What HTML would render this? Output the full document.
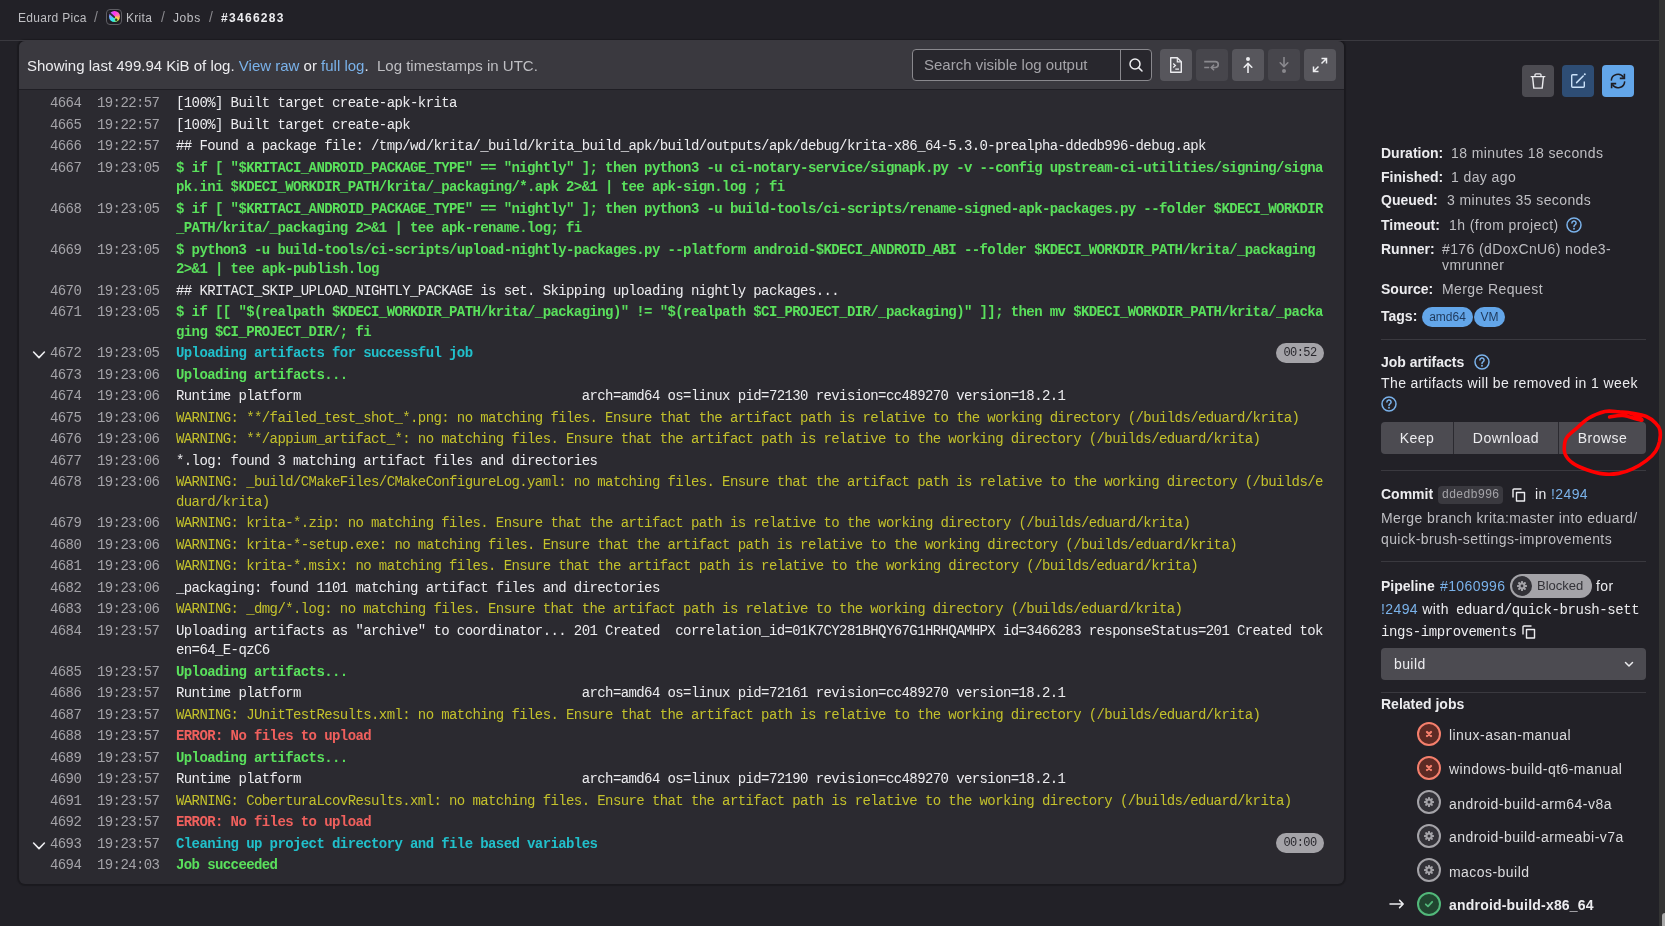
<!DOCTYPE html>
<html><head><meta charset="utf-8">
<style>
*{box-sizing:border-box;margin:0;padding:0}
html,body{width:1665px;height:926px;overflow:hidden}
body{background:#222127;font-family:"Liberation Sans",sans-serif;color:#ececef;position:relative}
#wrap{position:absolute;left:0;top:0;width:1665px;height:926px;will-change:transform}
.abs{position:absolute;white-space:nowrap}
/* breadcrumb */
.bc{position:absolute;top:0;left:0;height:40px;font-size:12px;line-height:16px;color:#bfbfc3}
.bc span{position:absolute;top:10px;white-space:nowrap}
.topline{position:absolute;left:0;top:40px;width:1659px;height:1px;background:#3a393f}
/* log */
.log{position:absolute;left:19px;top:41px;width:1325px;height:843px;background:#2b2a30;border-radius:6px;overflow:hidden;box-shadow:0 0 1px 2px rgba(0,0,0,.22)}
.lhead{position:absolute;left:0;top:0;width:1325px;height:49px;background:#3a393f;border-bottom:1px solid #1f1e24}
.lhead .msg{position:absolute;left:8px;top:16px;font-size:15px;line-height:18px;color:#ececef;white-space:nowrap}
.lhead .msg a{color:#7ab2ea;text-decoration:none}
.lhead .msg .dim{color:#bfbfc3}
.search{position:absolute;left:893px;top:8px;width:240px;height:32px;border:1px solid #89888d;border-radius:4px;background:#28272d}
.search .ph{position:absolute;left:11px;top:6px;font-size:15px;line-height:18px;color:#a4a3a8;white-space:nowrap}
.search .div{position:absolute;left:207px;top:0;width:1px;height:30px;background:#89888d}
.search svg{position:absolute;left:215px;top:7px}
.tb{position:absolute;top:8px;width:32px;height:32px;border-radius:4px;background:#57565c}
.tb.dis{background:#47464c}
.tb svg{position:absolute;left:8px;top:8px}
.row{position:absolute;left:0;width:1325px;font-family:"Liberation Mono",monospace;font-size:14px;letter-spacing:-0.6px;line-height:19.5px;padding-top:1px}
.row .ln{position:absolute;left:31px;top:1px;color:#a4a3a8}
.row .ts{position:absolute;left:78px;top:1px;color:#a4a3a8}
.row .tx{position:absolute;left:157px;top:1px;white-space:pre}
.row .chev{position:absolute;left:12px;top:3px}
.w{color:#ececef}
.g{color:#5ae05c;font-weight:bold}
.c{color:#21c0cb;font-weight:bold}
.y{color:#c3c12c}
.r{color:#f0605d;font-weight:bold}
.dur{position:absolute;left:1257px;top:-0.4px;width:48px;height:20px;border-radius:10px;background:#a4a3a8;color:#28272d;font-size:12px;line-height:20px;text-align:center}
/* sidebar */
.sb{font-size:14px;line-height:16px;color:#bfbfc3}
.sb b{color:#ececef;font-weight:bold;letter-spacing:0}
.sb .v{letter-spacing:.4px}
.hr{position:absolute;left:1381px;width:265px;height:1px;background:#3a393f}
.btn{position:absolute;width:32px;height:32px;border-radius:4px}
.btn svg{position:absolute;left:8px;top:8px}
.tag{position:absolute;top:307px;height:20px;border-radius:10px;background:#63a6e9;color:#1f3a5c;font-size:12px;line-height:20px;text-align:center}
.bgrp{position:absolute;left:1381px;top:422px;width:265px;height:32px;border-radius:4px;background:#4c4b51;overflow:hidden}
.bgrp span{position:absolute;top:0;height:32px;line-height:32px;font-size:14px;color:#ececef;text-align:center;letter-spacing:.5px}
.bgrp i{position:absolute;top:0;width:1px;height:32px;background:#2b2a30}
.link{color:#7ab2ea}
.mono{font-family:"Liberation Mono",monospace}
.job{position:absolute;left:1449px;font-size:14px;line-height:16px;color:#dcdcde;letter-spacing:.45px;white-space:nowrap}
.st{position:absolute;left:1417px;width:24px;height:24px;border-radius:50%}
.st svg{position:absolute;left:0;top:0}
.scroll{position:absolute;left:1659px;top:0;width:6px;height:926px;background:#333333}
</style></head><body><div id="wrap">

<div class="bc">
  <span style="left:18px;letter-spacing:.3px">Eduard Pica</span>
  <span style="left:94px;top:9px;font-size:14px;color:#89888d">/</span>
  <div style="position:absolute;left:106px;top:9px;width:16px;height:16px;border:1.2px solid #5f5e64;border-radius:4px;background:#1f1e24"></div>
  <div style="position:absolute;left:108.6px;top:11.4px;width:11px;height:11px;border-radius:50%;background:conic-gradient(from 0deg,#ff33ee 0deg,#ff66bb 60deg,#ffa070 95deg,#ffe040 125deg,#9be850 150deg,#30f0e0 195deg,#40d8ff 230deg,#7aa8ff 270deg,#b070ff 300deg,#ff33ee 360deg)"></div>
  <svg style="position:absolute;left:106px;top:9px" width="16" height="16" viewBox="0 0 16 16"><path d="M3 3.4 L8.2 8.2" stroke="#2a292e" stroke-width="1.8" stroke-linecap="round"/><circle cx="10.2" cy="10.8" r="1.2" fill="#2a292e"/></svg>
  <span style="left:126px;letter-spacing:.3px">Krita</span>
  <span style="left:161px;top:9px;font-size:14px;color:#89888d">/</span>
  <span style="left:173px;letter-spacing:.6px">Jobs</span>
  <span style="left:209px;top:9px;font-size:14px;color:#89888d">/</span>
  <span style="left:221px;color:#ececef;font-weight:bold;letter-spacing:1.3px">#3466283</span>
</div>

<div class="log">
  <div class="lhead">
    <div class="msg">Showing last 499.94 KiB of log. <a>View raw</a> or <a>full log</a>.&nbsp; <span class="dim">Log timestamps in UTC.</span></div>
    <div class="search"><span class="ph">Search visible log output</span><div class="div"></div>
      <svg width="16" height="16" viewBox="0 0 16 16"><circle cx="7" cy="7" r="5" fill="none" stroke="#ececef" stroke-width="1.5"/><path d="M10.6 10.6 L14 14" stroke="#ececef" stroke-width="1.5" stroke-linecap="round"/></svg>
    </div>
    <div class="tb" style="left:1141px"><svg width="16" height="16" viewBox="0 0 16 16"><path d="M2.7 0.8 H9.3 L13.3 4.8 V15.2 H2.7 Z" fill="none" stroke="#ececef" stroke-width="1.4" stroke-linejoin="round"/><path d="M9.3 0.8 V4.8 H13.3" fill="none" stroke="#ececef" stroke-width="1.2"/><path d="M5.2 6.6 L7.4 8.6 L5.2 10.6" fill="none" stroke="#ececef" stroke-width="1.3"/><path d="M7.3 12.2 H11" stroke="#ececef" stroke-width="1.3"/></svg></div>
    <div class="tb dis" style="left:1177px"><svg width="16" height="16" viewBox="0 0 16 16"><path d="M0.2 4.6 H11.3 A2.95 2.95 0 0 1 11.3 10.5 H7.5" fill="none" stroke="#8a898e" stroke-width="1.6"/><path d="M9.6 8.2 L7.3 10.5 L9.6 12.8" fill="none" stroke="#8a898e" stroke-width="1.6" stroke-linecap="round"/><path d="M0.2 10.5 H5.2" stroke="#8a898e" stroke-width="1.6"/></svg></div>
    <div class="tb" style="left:1213px"><svg width="16" height="16" viewBox="0 0 16 16"><circle cx="8" cy="2" r="2" fill="#ececef"/><path d="M8 6.5 V16" stroke="#ececef" stroke-width="1.6"/><path d="M4.2 10.2 L8 6.4 L11.8 10.2" fill="none" stroke="#ececef" stroke-width="1.6" stroke-linecap="round"/></svg></div>
    <div class="tb dis" style="left:1249px"><svg width="16" height="16" viewBox="0 0 16 16"><circle cx="8" cy="14" r="2" fill="#8a898e"/><path d="M8 0 V9.5" stroke="#8a898e" stroke-width="1.6"/><path d="M4.2 5.8 L8 9.6 L11.8 5.8" fill="none" stroke="#8a898e" stroke-width="1.6" stroke-linecap="round"/></svg></div>
    <div class="tb" style="left:1285px"><svg width="16" height="16" viewBox="0 0 16 16"><path d="M9.5 1.5 H14.5 V6.5 M14.5 1.5 L9.5 6.5" fill="none" stroke="#ececef" stroke-width="1.5"/><path d="M6.5 14.5 H1.5 V9.5 M1.5 14.5 L6.5 9.5" fill="none" stroke="#ececef" stroke-width="1.5"/></svg></div>
  </div>
<div class="row" style="top:52.30px;height:21.50px"><span class="ln">4664</span><span class="ts">19:22:57</span><span class="tx"><span class="w">[100%] Built target create-apk-krita</span></span></div>
<div class="row" style="top:73.80px;height:21.50px"><span class="ln">4665</span><span class="ts">19:22:57</span><span class="tx"><span class="w">[100%] Built target create-apk</span></span></div>
<div class="row" style="top:95.30px;height:21.50px"><span class="ln">4666</span><span class="ts">19:22:57</span><span class="tx"><span class="w">## Found a package file: /tmp/wd/krita/_build/krita_build_apk/build/outputs/apk/debug/krita-x86_64-5.3.0-prealpha-ddedb996-debug.apk</span></span></div>
<div class="row" style="top:116.80px;height:41.00px"><span class="ln">4667</span><span class="ts">19:23:05</span><span class="tx"><span class="g">$ if [ &quot;$KRITACI_ANDROID_PACKAGE_TYPE&quot; == &quot;nightly&quot; ]; then python3 -u ci-notary-service/signapk.py -v --config upstream-ci-utilities/signing/signa</span><br><span class="g">pk.ini $KDECI_WORKDIR_PATH/krita/_packaging/*.apk 2&gt;&amp;1 | tee apk-sign.log ; fi</span></span></div>
<div class="row" style="top:157.80px;height:41.00px"><span class="ln">4668</span><span class="ts">19:23:05</span><span class="tx"><span class="g">$ if [ &quot;$KRITACI_ANDROID_PACKAGE_TYPE&quot; == &quot;nightly&quot; ]; then python3 -u build-tools/ci-scripts/rename-signed-apk-packages.py --folder $KDECI_WORKDIR</span><br><span class="g">_PATH/krita/_packaging 2&gt;&amp;1 | tee apk-rename.log; fi</span></span></div>
<div class="row" style="top:198.80px;height:41.00px"><span class="ln">4669</span><span class="ts">19:23:05</span><span class="tx"><span class="g">$ python3 -u build-tools/ci-scripts/upload-nightly-packages.py --platform android-$KDECI_ANDROID_ABI --folder $KDECI_WORKDIR_PATH/krita/_packaging</span><br><span class="g">2&gt;&amp;1 | tee apk-publish.log</span></span></div>
<div class="row" style="top:239.80px;height:21.50px"><span class="ln">4670</span><span class="ts">19:23:05</span><span class="tx"><span class="w">## KRITACI_SKIP_UPLOAD_NIGHTLY_PACKAGE is set. Skipping uploading nightly packages...</span></span></div>
<div class="row" style="top:261.30px;height:41.00px"><span class="ln">4671</span><span class="ts">19:23:05</span><span class="tx"><span class="g">$ if [[ &quot;$(realpath $KDECI_WORKDIR_PATH/krita/_packaging)&quot; != &quot;$(realpath $CI_PROJECT_DIR/_packaging)&quot; ]]; then mv $KDECI_WORKDIR_PATH/krita/_packa</span><br><span class="g">ging $CI_PROJECT_DIR/; fi</span></span></div>
<div class="row" style="top:302.30px;height:21.50px"><svg class="chev" width="16" height="16" viewBox="0 0 16 16"><path d="M2.6 6 L8 11.6 L13.4 6" fill="none" stroke="#ececef" stroke-width="1.6" stroke-linecap="round" stroke-linejoin="round"/></svg><span class="ln">4672</span><span class="ts">19:23:05</span><span class="tx"><span class="c">Uploading artifacts for successful job</span></span><span class="dur">00:52</span></div>
<div class="row" style="top:323.80px;height:21.50px"><span class="ln">4673</span><span class="ts">19:23:06</span><span class="tx"><span class="g">Uploading artifacts...</span></span></div>
<div class="row" style="top:345.30px;height:21.50px"><span class="ln">4674</span><span class="ts">19:23:06</span><span class="tx"><span class="w">Runtime platform                                    arch=amd64 os=linux pid=72130 revision=cc489270 version=18.2.1</span></span></div>
<div class="row" style="top:366.80px;height:21.50px"><span class="ln">4675</span><span class="ts">19:23:06</span><span class="tx"><span class="y">WARNING: **/failed_test_shot_*.png: no matching files. Ensure that the artifact path is relative to the working directory (/builds/eduard/krita)</span></span></div>
<div class="row" style="top:388.30px;height:21.50px"><span class="ln">4676</span><span class="ts">19:23:06</span><span class="tx"><span class="y">WARNING: **/appium_artifact_*: no matching files. Ensure that the artifact path is relative to the working directory (/builds/eduard/krita)</span></span></div>
<div class="row" style="top:409.80px;height:21.50px"><span class="ln">4677</span><span class="ts">19:23:06</span><span class="tx"><span class="w">*.log: found 3 matching artifact files and directories</span></span></div>
<div class="row" style="top:431.30px;height:41.00px"><span class="ln">4678</span><span class="ts">19:23:06</span><span class="tx"><span class="y">WARNING: _build/CMakeFiles/CMakeConfigureLog.yaml: no matching files. Ensure that the artifact path is relative to the working directory (/builds/e</span><br><span class="y">duard/krita)</span></span></div>
<div class="row" style="top:472.30px;height:21.50px"><span class="ln">4679</span><span class="ts">19:23:06</span><span class="tx"><span class="y">WARNING: krita-*.zip: no matching files. Ensure that the artifact path is relative to the working directory (/builds/eduard/krita)</span></span></div>
<div class="row" style="top:493.80px;height:21.50px"><span class="ln">4680</span><span class="ts">19:23:06</span><span class="tx"><span class="y">WARNING: krita-*-setup.exe: no matching files. Ensure that the artifact path is relative to the working directory (/builds/eduard/krita)</span></span></div>
<div class="row" style="top:515.30px;height:21.50px"><span class="ln">4681</span><span class="ts">19:23:06</span><span class="tx"><span class="y">WARNING: krita-*.msix: no matching files. Ensure that the artifact path is relative to the working directory (/builds/eduard/krita)</span></span></div>
<div class="row" style="top:536.80px;height:21.50px"><span class="ln">4682</span><span class="ts">19:23:06</span><span class="tx"><span class="w">_packaging: found 1101 matching artifact files and directories</span></span></div>
<div class="row" style="top:558.30px;height:21.50px"><span class="ln">4683</span><span class="ts">19:23:06</span><span class="tx"><span class="y">WARNING: _dmg/*.log: no matching files. Ensure that the artifact path is relative to the working directory (/builds/eduard/krita)</span></span></div>
<div class="row" style="top:579.80px;height:41.00px"><span class="ln">4684</span><span class="ts">19:23:57</span><span class="tx"><span class="w">Uploading artifacts as &quot;archive&quot; to coordinator... 201 Created  correlation_id=01K7CY281BHQY67G1HRHQAMHPX id=3466283 responseStatus=201 Created tok</span><br><span class="w">en=64_E-qzC6</span></span></div>
<div class="row" style="top:620.80px;height:21.50px"><span class="ln">4685</span><span class="ts">19:23:57</span><span class="tx"><span class="g">Uploading artifacts...</span></span></div>
<div class="row" style="top:642.30px;height:21.50px"><span class="ln">4686</span><span class="ts">19:23:57</span><span class="tx"><span class="w">Runtime platform                                    arch=amd64 os=linux pid=72161 revision=cc489270 version=18.2.1</span></span></div>
<div class="row" style="top:663.80px;height:21.50px"><span class="ln">4687</span><span class="ts">19:23:57</span><span class="tx"><span class="y">WARNING: JUnitTestResults.xml: no matching files. Ensure that the artifact path is relative to the working directory (/builds/eduard/krita)</span></span></div>
<div class="row" style="top:685.30px;height:21.50px"><span class="ln">4688</span><span class="ts">19:23:57</span><span class="tx"><span class="r">ERROR: No files to upload</span></span></div>
<div class="row" style="top:706.80px;height:21.50px"><span class="ln">4689</span><span class="ts">19:23:57</span><span class="tx"><span class="g">Uploading artifacts...</span></span></div>
<div class="row" style="top:728.30px;height:21.50px"><span class="ln">4690</span><span class="ts">19:23:57</span><span class="tx"><span class="w">Runtime platform                                    arch=amd64 os=linux pid=72190 revision=cc489270 version=18.2.1</span></span></div>
<div class="row" style="top:749.80px;height:21.50px"><span class="ln">4691</span><span class="ts">19:23:57</span><span class="tx"><span class="y">WARNING: CoberturaLcovResults.xml: no matching files. Ensure that the artifact path is relative to the working directory (/builds/eduard/krita)</span></span></div>
<div class="row" style="top:771.30px;height:21.50px"><span class="ln">4692</span><span class="ts">19:23:57</span><span class="tx"><span class="r">ERROR: No files to upload</span></span></div>
<div class="row" style="top:792.80px;height:21.50px"><svg class="chev" width="16" height="16" viewBox="0 0 16 16"><path d="M2.6 6 L8 11.6 L13.4 6" fill="none" stroke="#ececef" stroke-width="1.6" stroke-linecap="round" stroke-linejoin="round"/></svg><span class="ln">4693</span><span class="ts">19:23:57</span><span class="tx"><span class="c">Cleaning up project directory and file based variables</span></span><span class="dur">00:00</span></div>
<div class="row" style="top:814.30px;height:21.50px"><span class="ln">4694</span><span class="ts">19:24:03</span><span class="tx"><span class="g">Job succeeded</span></span></div>
</div>

<div class="topline"></div>
<div class="scroll"></div>
<div style="position:absolute;left:1662px;top:913px;width:6px;height:30px;border-radius:3px;background:#a9a9a9"></div>
<!-- sidebar -->
<div class="sb">
  <div class="btn" style="left:1522px;top:65px;background:#4c4b51"><svg width="16" height="16" viewBox="0 0 16 16"><path d="M1.2 3.6 H14.8" stroke="#ececef" stroke-width="1.4" stroke-linecap="round"/><path d="M5 3.4 V1.8 A1 1 0 0 1 6 0.8 H10 A1 1 0 0 1 11 1.8 V3.4" fill="none" stroke="#ececef" stroke-width="1.3"/><path d="M2.6 4 L3.8 15.1 H12.2 L13.4 4" fill="none" stroke="#ececef" stroke-width="1.4" stroke-linejoin="round"/></svg></div>
  <div class="btn" style="left:1562px;top:65px;background:#2e4d74"><svg width="16" height="16" viewBox="0 0 16 16"><path d="M7.5 1.7 H2.7 A1 1 0 0 0 1.7 2.7 V13.3 A1 1 0 0 0 2.7 14.3 H13.3 A1 1 0 0 0 14.3 13.3 V8.5" fill="none" stroke="#cbe2f9" stroke-width="1.4"/><path d="M6.6 9.6 L13.2 3" stroke="#cbe2f9" stroke-width="1.5" stroke-linecap="round"/><circle cx="14.8" cy="1.2" r="1" fill="#cbe2f9"/></svg></div>
  <div class="btn" style="left:1602px;top:65px;background:#63a6e9"><svg width="16" height="16" viewBox="0 0 16 16"><path d="M1.3 7.6 A6.6 6.6 0 0 1 13.6 4.6" fill="none" stroke="#1f1e24" stroke-width="1.5"/><path d="M14.4 0.8 V5.4 H9.8" fill="none" stroke="#1f1e24" stroke-width="1.6" stroke-linejoin="miter"/><path d="M14.7 8.4 A6.6 6.6 0 0 1 2.4 11.4" fill="none" stroke="#1f1e24" stroke-width="1.5"/><path d="M1.6 15.2 V10.6 H6.2" fill="none" stroke="#1f1e24" stroke-width="1.6"/></svg></div>

  <div class="abs" style="left:1381px;top:144.85px"><b>Duration:</b></div><div class="abs v" style="left:1451px;top:144.85px">18 minutes 18 seconds</div>
  <div class="abs" style="left:1381px;top:168.65px"><b>Finished:</b></div><div class="abs v" style="left:1451px;top:168.65px">1 day ago</div>
  <div class="abs" style="left:1381px;top:192.35px"><b>Queued:</b></div><div class="abs v" style="left:1447px;top:192.35px">3 minutes 35 seconds</div>
  <div class="abs" style="left:1381px;top:216.75px"><b>Timeout:</b></div><div class="abs v" style="left:1449px;top:216.75px">1h (from project)</div>
  <svg class="abs" style="left:1566px;top:217px" width="16" height="16" viewBox="0 0 16 16"><circle cx="8" cy="8" r="7" fill="none" stroke="#7ab2ea" stroke-width="1.5"/><path d="M5.9 6.1 A2.1 2.1 0 1 1 9 7.9 C8.3 8.3 8 8.7 8 9.5" fill="none" stroke="#7ab2ea" stroke-width="1.5" stroke-linecap="round"/><circle cx="8" cy="11.8" r="0.95" fill="#7ab2ea"/></svg>
  <div class="abs" style="left:1381px;top:240.95px"><b>Runner:</b></div><div class="abs v" style="left:1442px;top:240.95px">#176 (dDoxCnU6) node3-<br>vmrunner</div>
  <div class="abs" style="left:1381px;top:280.75px"><b>Source:</b></div><div class="abs v" style="left:1442px;top:280.75px">Merge Request</div>
  <div class="abs" style="left:1381px;top:307.85px"><b>Tags:</b></div>
  <div class="tag" style="left:1422px;width:51px">amd64</div>
  <div class="tag" style="left:1474px;width:31px">VM</div>
  <div class="hr" style="top:339px"></div>

  <div class="abs" style="left:1381px;top:354.35px"><b>Job artifacts</b></div>
  <svg class="abs" style="left:1474px;top:354px" width="16" height="16" viewBox="0 0 16 16"><circle cx="8" cy="8" r="7" fill="none" stroke="#7ab2ea" stroke-width="1.5"/><path d="M5.9 6.1 A2.1 2.1 0 1 1 9 7.9 C8.3 8.3 8 8.7 8 9.5" fill="none" stroke="#7ab2ea" stroke-width="1.5" stroke-linecap="round"/><circle cx="8" cy="11.8" r="0.95" fill="#7ab2ea"/></svg>
  <div class="abs v" style="left:1381px;top:374.75px;color:#ececef">The artifacts will be removed in 1 week</div>
  <svg class="abs" style="left:1381px;top:396px" width="16" height="16" viewBox="0 0 16 16"><circle cx="8" cy="8" r="7" fill="none" stroke="#7ab2ea" stroke-width="1.5"/><path d="M5.9 6.1 A2.1 2.1 0 1 1 9 7.9 C8.3 8.3 8 8.7 8 9.5" fill="none" stroke="#7ab2ea" stroke-width="1.5" stroke-linecap="round"/><circle cx="8" cy="11.8" r="0.95" fill="#7ab2ea"/></svg>
  <div class="bgrp"><span style="left:0;width:72px">Keep</span><i style="left:72px"></i><span style="left:73px;width:104px">Download</span><i style="left:177px"></i><span style="left:178px;width:87px">Browse</span></div>
  <div class="hr" style="top:470px"></div>

  <div class="abs" style="left:1381px;top:485.95px"><b>Commit</b></div>
  <div class="abs mono" style="left:1438px;top:486px;width:65px;height:18px;border-radius:4px;background:#3a393f;color:#a4a3a8;font-size:12px;line-height:18px;text-align:center">ddedb996</div>
  <svg class="abs" style="left:1511px;top:487px" width="16" height="16" viewBox="0 0 16 16"><path d="M5.5 5.5 H13.5 V14 H5.5 Z" fill="none" stroke="#ececef" stroke-width="1.4" stroke-linejoin="round"/><path d="M10.5 2 H3 A1 1 0 0 0 2 3 V10.5" fill="none" stroke="#ececef" stroke-width="1.4"/></svg>
  <div class="abs v" style="left:1535px;top:485.95px;color:#ececef">in <span class="link">!2494</span></div>
  <div class="abs v" style="left:1381px;top:510.15px;line-height:21.3px;margin-top:-2.65px">Merge branch krita:master into eduard/<br>quick-brush-settings-improvements</div>
  <div class="hr" style="top:561px"></div>

  <div class="abs" style="left:1381px;top:577.55px"><b>Pipeline</b></div>
  <div class="abs v link" style="left:1440px;top:577.55px">#1060996</div>
  <div class="abs" style="left:1510px;top:574px;width:82px;height:24px;border-radius:12px;background:#a4a3a8"></div>
  <div class="abs" style="left:1512px;top:576px;width:20px;height:20px;border-radius:10px;background:#333238"></div>
  <svg class="abs" style="left:1516px;top:580px" width="12" height="12" viewBox="0 0 12 12"><g fill="#a4a3a8"><circle cx="6" cy="6" r="3.4"/><rect x="5" y="1" width="2" height="10" rx=".5"/><rect x="1" y="5" width="10" height="2" rx=".5"/><rect x="5" y="1" width="2" height="10" rx=".5" transform="rotate(45 6 6)"/><rect x="5" y="1" width="2" height="10" rx=".5" transform="rotate(-45 6 6)"/></g><circle cx="6" cy="6" r="1.4" fill="#333238"/></svg>
  <div class="abs" style="left:1537px;top:578px;font-size:13px;line-height:16px;color:#333238;letter-spacing:0">Blocked</div>
  <div class="abs v" style="left:1596px;top:577.55px;color:#ececef">for</div>
  <div class="abs v" style="left:1381px;top:600.65px;color:#ececef"><span class="link">!2494</span> with</div>
  <div class="abs mono" style="left:1456px;top:601.6px;font-size:14px;letter-spacing:-0.44px;color:#ececef">eduard/quick-brush-sett</div>
  <div class="abs mono" style="left:1381px;top:623.5px;font-size:14px;letter-spacing:-0.44px;color:#ececef">ings-improvements</div>
  <svg class="abs" style="left:1521px;top:624px" width="16" height="16" viewBox="0 0 16 16"><path d="M5.5 5.5 H13.5 V14 H5.5 Z" fill="none" stroke="#ececef" stroke-width="1.4" stroke-linejoin="round"/><path d="M10.5 2 H3 A1 1 0 0 0 2 3 V10.5" fill="none" stroke="#ececef" stroke-width="1.4"/></svg>
  <div class="abs" style="left:1381px;top:648px;width:265px;height:32px;border-radius:4px;background:#4c4b51"></div>
  <div class="abs v" style="left:1394px;top:656px;color:#ececef">build</div>
  <svg class="abs" style="left:1621px;top:656px" width="16" height="16" viewBox="0 0 16 16"><path d="M4.5 6.5 L8 10 L11.5 6.5" fill="none" stroke="#ececef" stroke-width="1.5" stroke-linecap="round" stroke-linejoin="round"/></svg>
  <div class="hr" style="top:692px"></div>

  <div class="abs" style="left:1381px;top:696.25px"><b>Related jobs</b></div>
<div class="st" style="top:721.8px"><svg width="24" height="24" viewBox="0 0 24 24"><circle cx="12" cy="12" r="11" fill="#5c2a24" stroke="#f57f6c" stroke-width="2"/><path d="M10 10 L14 14 M14 10 L10 14" stroke="#f57f6c" stroke-width="2.3" stroke-linecap="round"/></svg></div>
<div class="job" style="top:727.25px">linux-asan-manual</div>
<div class="st" style="top:755.7px"><svg width="24" height="24" viewBox="0 0 24 24"><circle cx="12" cy="12" r="11" fill="#5c2a24" stroke="#f57f6c" stroke-width="2"/><path d="M10 10 L14 14 M14 10 L10 14" stroke="#f57f6c" stroke-width="2.3" stroke-linecap="round"/></svg></div>
<div class="job" style="top:761.15px">windows-build-qt6-manual</div>
<div class="st" style="top:790.1px"><svg width="24" height="24" viewBox="0 0 24 24"><circle cx="12" cy="12" r="11" fill="#333238" stroke="#a4a3a8" stroke-width="2"/><g fill="#a4a3a8"><circle cx="12" cy="12" r="3.6"/><rect x="11" y="7" width="2" height="10" rx=".6"/><rect x="7" y="11" width="10" height="2" rx=".6"/><rect x="11" y="7" width="2" height="10" rx=".6" transform="rotate(45 12 12)"/><rect x="11" y="7" width="2" height="10" rx=".6" transform="rotate(-45 12 12)"/></g><circle cx="12" cy="12" r="1.5" fill="#333238"/></svg></div>
<div class="job" style="top:795.55px">android-build-arm64-v8a</div>
<div class="st" style="top:823.8px"><svg width="24" height="24" viewBox="0 0 24 24"><circle cx="12" cy="12" r="11" fill="#333238" stroke="#a4a3a8" stroke-width="2"/><g fill="#a4a3a8"><circle cx="12" cy="12" r="3.6"/><rect x="11" y="7" width="2" height="10" rx=".6"/><rect x="7" y="11" width="10" height="2" rx=".6"/><rect x="11" y="7" width="2" height="10" rx=".6" transform="rotate(45 12 12)"/><rect x="11" y="7" width="2" height="10" rx=".6" transform="rotate(-45 12 12)"/></g><circle cx="12" cy="12" r="1.5" fill="#333238"/></svg></div>
<div class="job" style="top:829.25px">android-build-armeabi-v7a</div>
<div class="st" style="top:858.2px"><svg width="24" height="24" viewBox="0 0 24 24"><circle cx="12" cy="12" r="11" fill="#333238" stroke="#a4a3a8" stroke-width="2"/><g fill="#a4a3a8"><circle cx="12" cy="12" r="3.6"/><rect x="11" y="7" width="2" height="10" rx=".6"/><rect x="7" y="11" width="10" height="2" rx=".6"/><rect x="11" y="7" width="2" height="10" rx=".6" transform="rotate(45 12 12)"/><rect x="11" y="7" width="2" height="10" rx=".6" transform="rotate(-45 12 12)"/></g><circle cx="12" cy="12" r="1.5" fill="#333238"/></svg></div>
<div class="job" style="top:863.65px">macos-build</div>
<div class="st" style="top:892.0px"><svg width="24" height="24" viewBox="0 0 24 24"><circle cx="12" cy="12" r="11" fill="#214530" stroke="#52b87a" stroke-width="2"/><path d="M8.8 12.3 L11 14.3 L15.2 9.8" fill="none" stroke="#52b87a" stroke-width="1.8" stroke-linecap="round" stroke-linejoin="round"/></svg></div>
<div class="job" style="top:897.45px;font-weight:bold;color:#ececef;letter-spacing:.2px">android-build-x86_64</div>
<svg class="abs" style="left:1389px;top:897px" width="16" height="14" viewBox="0 0 16 14"><path d="M1 7 H14 M10.6 3.4 L14.2 7 L10.6 10.6" fill="none" stroke="#ececef" stroke-width="1.5" stroke-linecap="round" stroke-linejoin="round"/></svg>
</div>

<svg class="abs" style="left:1550px;top:400px" width="115" height="90" viewBox="1550 400 115 90">
  <path d="M1609.6 417.0 C1611.8 416.8 1617.7 415.0 1623.0 415.5 C1628.3 416.0 1640.1 420.5 1641.7 420.2 C1643.3 419.9 1636.4 415.2 1632.6 413.8 C1628.8 412.4 1623.4 412.4 1618.8 412.0 C1614.2 411.6 1610.0 410.4 1605.0 411.5 C1600.0 412.6 1593.1 415.6 1588.5 418.3 C1583.9 421.0 1581.0 424.4 1577.5 427.5 C1574.0 430.6 1569.5 434.1 1567.4 436.7 C1565.3 439.3 1565.1 440.2 1564.7 443.1 C1564.3 446.0 1563.7 450.7 1565.1 454.1 C1566.5 457.5 1569.4 460.7 1573.0 463.3 C1576.6 465.9 1581.7 467.9 1586.7 469.7 C1591.7 471.5 1597.9 473.3 1603.2 473.9 C1608.5 474.5 1613.9 474.2 1618.8 473.4 C1623.7 472.5 1628.0 470.9 1632.6 468.8 C1637.2 466.7 1642.5 463.5 1646.3 460.6 C1650.1 457.7 1653.3 454.6 1655.5 451.4 C1657.7 448.2 1658.8 444.8 1659.6 441.3 C1660.3 437.8 1660.7 433.4 1660.0 430.3 C1659.3 427.2 1657.8 425.3 1655.5 423.0 C1653.2 420.7 1650.1 418.1 1646.3 416.5 C1642.5 414.9 1637.2 414.1 1632.6 413.3 C1628.0 412.5 1621.1 412.1 1618.8 411.8" fill="none" stroke="#ff0000" stroke-width="3.6" stroke-linecap="round" stroke-linejoin="round"/>
</svg>


</div>
</body></html>
